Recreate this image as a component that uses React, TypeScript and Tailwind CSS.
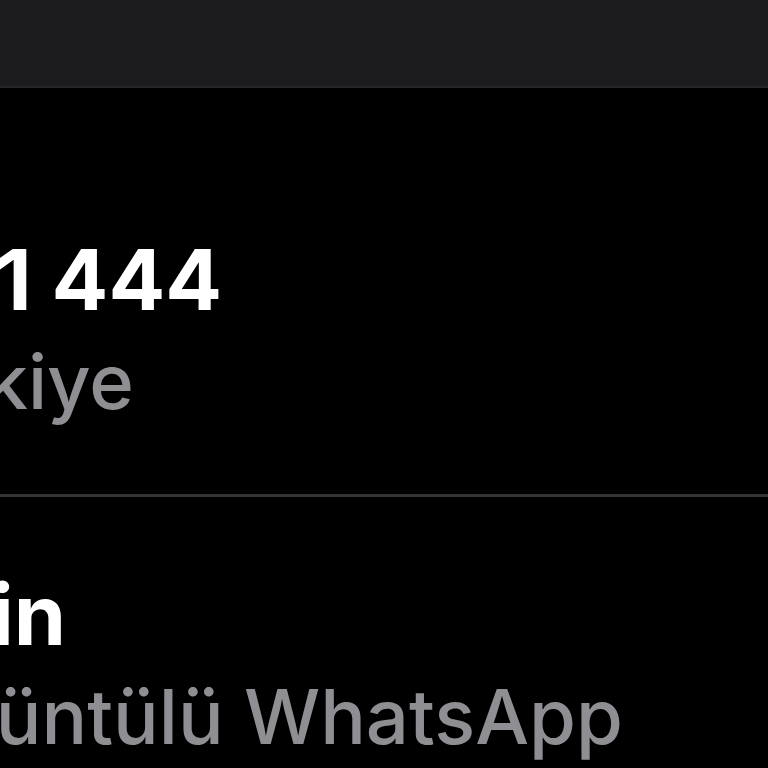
const rows = [
  { title: "444 1 444", titleEnd: "w-[222px]", sub: "Türkiye", subEnd: "w-[134px]" },
];

function Line({ text, end, className }: { text: string; end: string; className: string }) {
  return (
    <div className={`flex justify-end whitespace-nowrap ${end} ${className}`}>
      <span>{text}</span>
    </div>
  );
}

export default function App() {
  return (
    <div
      className="w-[768px] h-[768px] overflow-hidden bg-black"
      style={{ fontFamily: "Inter, 'Noto Sans', sans-serif" }}
    >
      <div className="h-[88px] bg-[#1c1c1e] border-b-2 border-[#262628]" />

      <div className="pt-[144px]">
        {rows.map((r) => (
          <div key={r.title}>
            <Line text={r.title} end={r.titleEnd} className="text-[84px] leading-[96px] font-bold text-white" />
            <Line text={r.sub} end={r.subEnd} className="mt-[5px] text-[76px] leading-[96px] font-medium text-[#8e8e93]" />
          </div>
        ))}
      </div>

      <div className="mt-[65px] h-[3px] bg-[#353537]" />

      <div className="pt-[70px]">
        <Line text="Görüntülü arama ve mesajlaşmak için" end="w-[66px]" className="text-[84px] leading-[96px] font-bold text-white" />
        <Line text="Görüntülü WhatsApp" end="w-[623px]" className="mt-[5px] text-[76px] leading-[96px] font-medium text-[#8e8e93]" />
      </div>
    </div>
  );
}
